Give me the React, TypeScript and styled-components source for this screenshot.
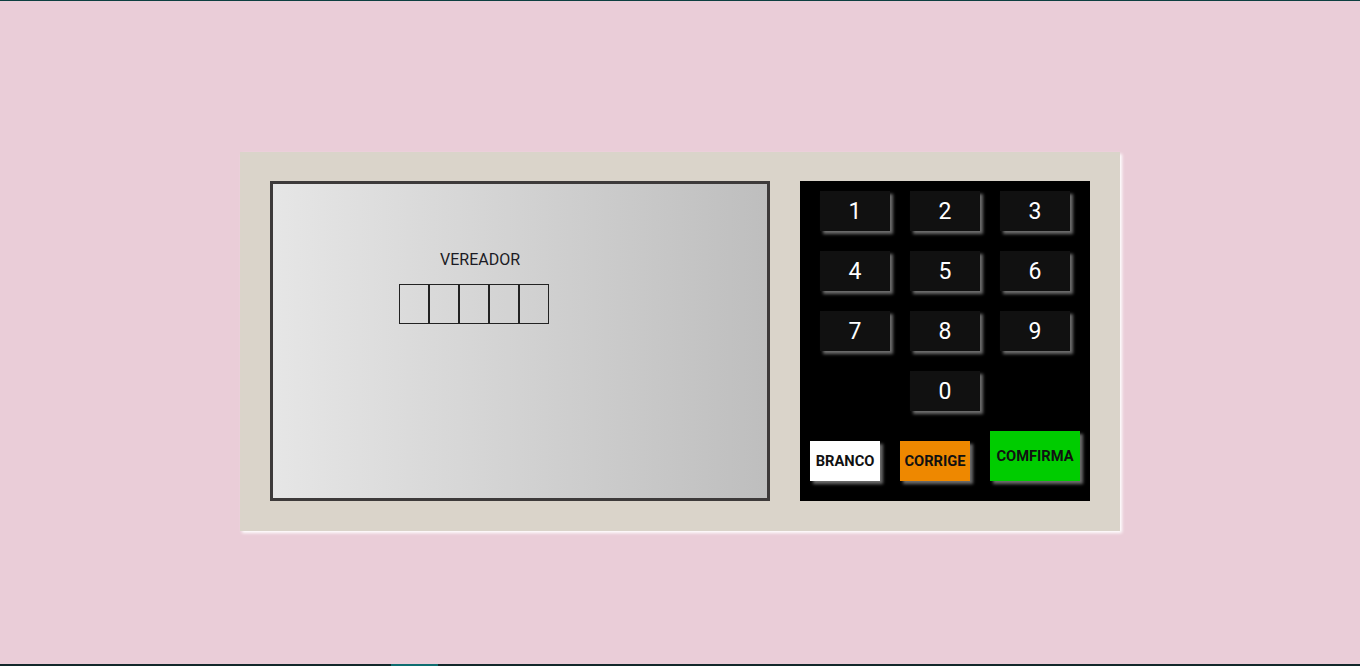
import React from "react";
import styled, { createGlobalStyle } from "styled-components";

const Global = createGlobalStyle`
  html, body { margin: 0; padding: 0; }
  body {
    background: #eacdd8;
    font-family: Roboto, "Liberation Sans", Arial, sans-serif;
    height: 666px;
    overflow: hidden;
  }
`;

const Page = styled.div`
  height: 666px;
  box-sizing: border-box;
  border-top: 1px solid #0d3f40;
  border-bottom: 2px solid #13282b;
  display: flex;
  justify-content: center;
  align-items: flex-start;
  padding-top: 151px;
  position: relative;
`;

const TaskMark = styled.div`
  position: absolute;
  left: 391px;
  bottom: -2px;
  width: 47px;
  height: 2px;
  background: #0e6d70;
`;

const Urna = styled.div`
  width: 880px;
  height: 379px;
  box-sizing: border-box;
  background: #dad4ca;
  padding: 29px 30px 30px 30px;
  display: flex;
  gap: 30px;
  box-shadow: 2px 2px 3px #ffffff;
`;

const Screen = styled.div`
  width: 500px;
  height: 320px;
  box-sizing: border-box;
  border: 3px solid #3d3a3a;
  background: linear-gradient(to right, #e6e6e6, #bebebe);
  display: flex;
  flex-direction: column;
  padding-top: 67px;
`;

const Cargo = styled.div`
  font-size: 16px;
  color: #1b1b24;
  margin-left: 167px;
  line-height: 18px;
`;

const Digits = styled.div`
  display: flex;
  margin-left: 126px;
  margin-top: 15px;
`;

const DigitBox = styled.div`
  width: 30px;
  height: 40px;
  box-sizing: border-box;
  border: 1px solid #222;
`;

const Keypad = styled.div`
  width: 290px;
  height: 320px;
  box-sizing: border-box;
  background: #000;
  padding: 10px 10px 0 10px;
  display: flex;
  flex-direction: column;
`;

const KeyRow = styled.div`
  display: flex;
  justify-content: center;
  gap: 20px;
  margin-bottom: 20px;
`;

const Key = styled.div`
  width: 70px;
  height: 40px;
  box-sizing: border-box;
  padding-top: 1px;
  background: #111;
  color: #fff;
  font-size: 23px;
  display: flex;
  align-items: center;
  justify-content: center;
  box-shadow: 3px 3px 3px #6e6e6e;
`;

const ActionRow = styled.div`
  display: flex;
  align-items: flex-end;
  gap: 20px;
`;

const Action = styled.div<{ $bg: string; $w: number; $h: number }>`
  width: ${(p) => p.$w}px;
  height: ${(p) => p.$h}px;
  background: ${(p) => p.$bg};
  color: #111;
  font-weight: 700;
  font-size: 14.7px;
  white-space: nowrap;
  display: flex;
  align-items: center;
  justify-content: center;
  box-shadow: 3px 3px 3px #6e6e6e;
`;

export default function App() {
  const rows = [["1", "2", "3"], ["4", "5", "6"], ["7", "8", "9"], ["0"]];
  return (
    <Page>
      <Global />
      <Urna>
        <Screen>
          <Cargo>VEREADOR</Cargo>
          <Digits>
            {[0, 1, 2, 3, 4].map((i) => (
              <DigitBox key={i} />
            ))}
          </Digits>
        </Screen>
        <Keypad>
          {rows.map((r, i) => (
            <KeyRow key={i}>
              {r.map((k) => (
                <Key key={k}>{k}</Key>
              ))}
            </KeyRow>
          ))}
          <ActionRow>
            <Action $bg="#ffffff" $w={70} $h={40}>BRANCO</Action>
            <Action $bg="#ee8800" $w={70} $h={40}>CORRIGE</Action>
            <Action $bg="#00cc00" $w={90} $h={50}>COMFIRMA</Action>
          </ActionRow>
        </Keypad>
      </Urna>
      <TaskMark />
    </Page>
  );
}
